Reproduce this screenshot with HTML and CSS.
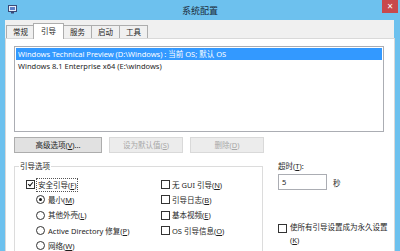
FILE: index.html
```html
<!DOCTYPE html>
<html lang="zh-CN">
<head>
    <meta charset="UTF-8">
    <title>系统配置</title>
    <link rel="stylesheet" href="styles.css">
</head>
<body>
    <div class="window">
        <div class="titlebar">
            <svg class="app-icon" width="9" height="9" viewBox="0 0 9 9">
                <rect x="0.5" y="0.5" width="8" height="6" fill="#e8eef8" stroke="#3a4a78"/>
                <rect x="2" y="2" width="5" height="3" fill="#5b7fc8"/>
                <rect x="3" y="7" width="3" height="1.5" fill="#3a4a78"/>
            </svg>
            <span class="title">系统配置</span>
            <span class="close">×</span>
        </div>
        <div class="client">
            <div class="tabs">
                <div class="tab">常规</div>
                <div class="tab active">引导</div>
                <div class="tab">服务</div>
                <div class="tab">启动</div>
                <div class="tab">工具</div>
            </div>
            <div class="panel">
                <div class="os-list">
                    <div class="os selected">Windows Technical Preview (D:\Windows) : 当前 OS; 默认 OS</div>
                    <div class="os">Windows 8.1 Enterprise x64 (E:\windows)</div>
                </div>
                <div class="btn-row">
                    <div class="btn wide">高级选项(<u>V</u>)...</div>
                    <div class="btn disabled">设为默认值(<u>S</u>)</div>
                    <div class="btn disabled">删除(<u>D</u>)</div>
                </div>
                <div class="lower">
                    <fieldset class="group">
                        <legend>引导选项</legend>
                        <div class="group-cols">
                            <div class="col">
                                <div class="opt"><span class="check on"></span><span class="focus">安全引导(<u>F</u>)</span></div>
                                <div class="opt sub"><span class="radio on"></span>最小(<u>M</u>)</div>
                                <div class="opt sub"><span class="radio"></span>其他外壳(<u>L</u>)</div>
                                <div class="opt sub"><span class="radio"></span>Active Directory 修复(<u>P</u>)</div>
                                <div class="opt sub"><span class="radio"></span>网络(<u>W</u>)</div>
                            </div>
                            <div class="col">
                                <div class="opt"><span class="check"></span>无 GUI 引导(<u>N</u>)</div>
                                <div class="opt"><span class="check"></span>引导日志(<u>B</u>)</div>
                                <div class="opt"><span class="check"></span>基本视频(<u>E</u>)</div>
                                <div class="opt"><span class="check"></span>OS 引导信息(<u>O</u>)</div>
                            </div>
                        </div>
                    </fieldset>
                    <div class="side">
                        <div class="timeout-label">超时(<u>T</u>):</div>
                        <div class="timeout-row">
                            <div class="input">5</div>
                            <span>秒</span>
                        </div>
                        <div class="opt permanent"><span class="check"></span><span class="nowrap">使所有引导设置成为永久设置<br>(<u>K</u>)</span></div>
                    </div>
                </div>
            </div>
        </div>
    </div>
</body>
</html>
```

FILE: styles.css
```css
body {
    margin: 0;
    width: 400px;
    height: 251px;
    overflow: hidden;
    background-color: #6dc1ee;
    font-family: "Noto Sans", "Noto Sans CJK SC", sans-serif;
    font-size: 7.5px;
    color: #1e1e1e;
}

u {
    text-decoration: underline;
}

.nowrap {
    white-space: nowrap;
}

.window {
    height: 251px;
    display: flex;
    flex-direction: column;
}

.titlebar {
    height: 20px;
    flex-shrink: 0;
    display: flex;
    align-items: center;
    position: relative;
    padding-left: 8px;
}

.app-icon {
    display: block;
    margin-top: -2px;
}

.title {
    flex: 1;
    text-align: center;
    font-size: 9px;
    color: #1b2b3a;
    margin-left: -17px;
}

.close {
    position: absolute;
    top: 0;
    right: 2px;
    width: 16px;
    height: 13px;
    background-color: #c8484c;
    color: #fff;
    font-size: 10px;
    line-height: 12px;
    text-align: center;
}

.client {
    flex: 1;
    margin: 0 6px 0 5px;
    background-color: #f0f0f0;
    display: flex;
    flex-direction: column;
    min-height: 0;
}

.tabs {
    display: flex;
    padding: 6px 0 0 1px;
    height: 12px;
    align-items: flex-end;
}

.tab {
    width: 27px;
    height: 12px;
    border: 1px solid #adadad;
    border-bottom: none;
    margin-right: -1px;
    background-color: #f0f0f0;
    text-align: center;
    line-height: 12px;
}

.tab.active {
    width: 29px;
    height: 15px;
    margin: 0 -1px -1px -1px;
    background-color: #fff;
    position: relative;
    z-index: 1;
    line-height: 14px;
}

.panel {
    flex: 1;
    margin-right: -1px;
    background-color: #fff;
    border: 1px solid #d9d9d9;
    border-bottom: none;
    padding: 7px 8px 0 8px;
    min-height: 0;
}

.os-list {
    width: 368px;
    height: 83px;
    border: 1px solid #abadb3;
    padding-top: 1px;
}

.os {
    height: 12px;
    line-height: 12px;
    padding-left: 2px;
    margin: 0 1px;
    white-space: nowrap;
}

.os.selected {
    background-color: #3399ff;
    color: #fff;
}

.btn-row {
    display: flex;
    gap: 7px;
    margin-top: 5px;
}

.btn {
    width: 72px;
    height: 14px;
    line-height: 14px;
    text-align: center;
    background-color: #e1e1e1;
    border: 1px solid #adadad;
}

.btn.wide {
    width: 86px;
}

.btn.disabled {
    background-color: #ececec;
    border-color: #d9d9d9;
    color: #a8a8a8;
}

.lower {
    display: flex;
    margin-top: 8px;
}

.group {
    width: 236px;
    height: 100px;
    margin: 0;
    padding: 6px 0 0 11px;
    border: 1px solid #dcdcdc;
    border-bottom: none;
    flex-shrink: 0;
}

.group legend {
    padding: 0 1px;
    margin-left: -7px;
    line-height: 10px;
}

.group-cols {
    display: flex;
}

.col {
    display: flex;
    flex-direction: column;
}

.col:first-child {
    width: 135px;
}

.opt {
    display: flex;
    align-items: center;
    height: 15.3px;
    line-height: 12px;
}

.opt.sub {
    padding-left: 10px;
}

.check {
    width: 7px;
    height: 7px;
    border: 1px solid #333;
    background-color: #fff;
    margin-right: 2px;
    flex-shrink: 0;
    position: relative;
}

.check.on::after {
    content: "";
    position: absolute;
    left: 2px;
    top: 0;
    width: 2px;
    height: 4px;
    border: solid #111;
    border-width: 0 1.5px 1.5px 0;
    transform: rotate(40deg);
}

.radio {
    width: 7px;
    height: 7px;
    border: 1px solid #333;
    border-radius: 50%;
    margin-right: 3px;
    flex-shrink: 0;
    position: relative;
}

.radio.on::after {
    content: "";
    position: absolute;
    left: 2px;
    top: 2px;
    width: 3px;
    height: 3px;
    border-radius: 50%;
    background-color: #111;
}

.focus {
    outline: 1px dotted #555;
    padding: 0 1px;
}

.side {
    padding-left: 15px;
    display: flex;
    flex-direction: column;
}

.timeout-label {
    line-height: 10px;
}

.timeout-row {
    display: flex;
    align-items: center;
    gap: 6px;
    margin-top: 3px;
}

.input {
    width: 44px;
    height: 14px;
    line-height: 14px;
    padding-left: 3px;
    border: 1px solid #abadb3;
    background-color: #fff;
}

.permanent {
    margin-top: 31px;
    align-items: flex-start;
    height: auto;
    line-height: 13px;
}

.permanent .check {
    margin-top: 3px;
    margin-right: 3px;
}
```
